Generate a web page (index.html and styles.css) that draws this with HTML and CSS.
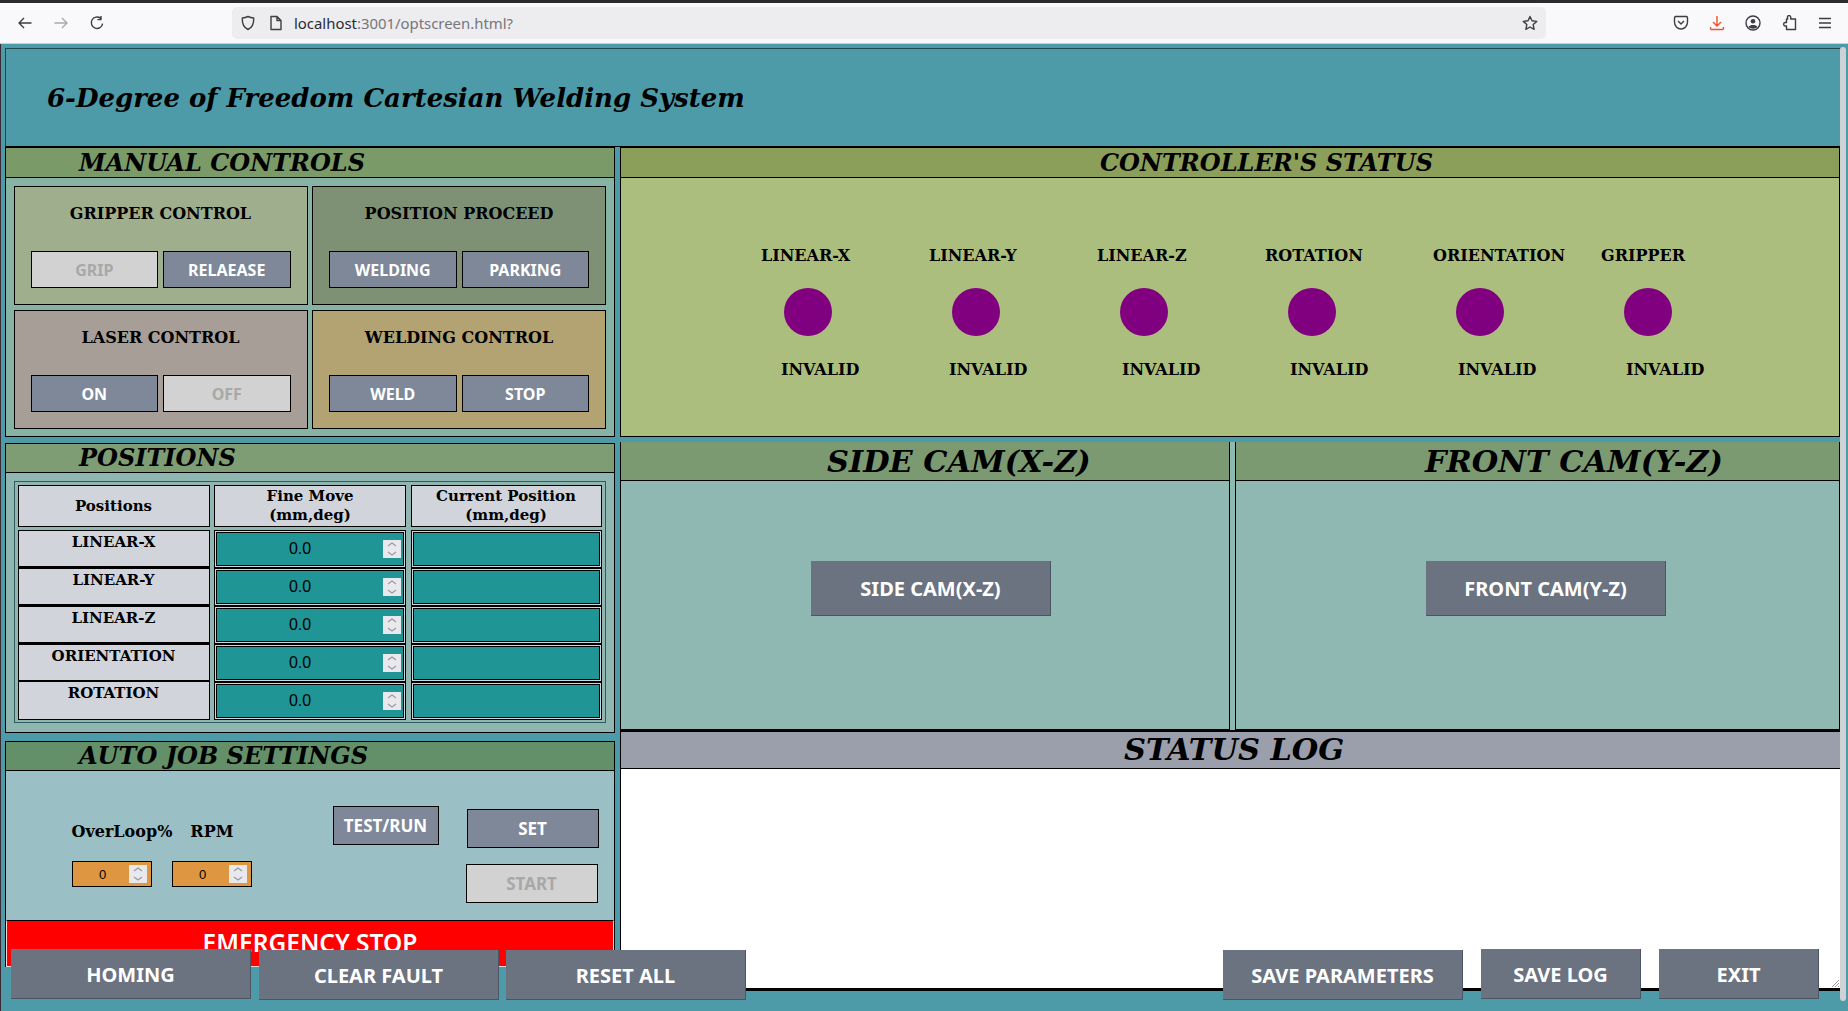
FILE: index.html
```html
<!DOCTYPE html>
<html lang="en">
<head>
<meta charset="utf-8">
<title>optscreen</title>
<link rel="stylesheet" href="styles.css">
</head>
<body>
<div class="browser-top"></div>
<nav class="toolbar">
  <div class="nav-icons">
    <svg class="icon" viewBox="0 0 16 16"><path d="M14.5 8H2M7 3 2 8l5 5" /></svg>
    <svg class="icon icon-dim" viewBox="0 0 16 16"><path d="M1.5 8H14M9 3l5 5-5 5" /></svg>
    <svg class="icon" viewBox="0 0 16 16"><path d="M13.6 8.6A5.7 5.7 0 1 1 11.6 3.4M12 1v3.6H8.4" /></svg>
  </div>
  <div class="urlbar">
    <svg class="icon" viewBox="0 0 16 16"><path d="M8 1.500c2 1 3.600 1.400 5.700 1.500.3 5.500-1.500 9.500-5.700 11.500C3.800 12.500 2 8.500 2.300 3 4.400 2.900 6 2.500 8 1.500Z"/></svg>
    <svg class="icon icon-page" viewBox="0 0 16 16"><path d="M3 1.500h6l4 4v9H3ZM9 1.500v4h4"/></svg>
    <span class="url"><span class="url-host">localhost</span>:3001/optscreen.html?</span>
    <svg class="icon icon-star" viewBox="0 0 16 16"><path d="m8 1.500 2 4.300 4.700.6-3.500 3.200.9 4.700L8 12l-4.100 2.300.9-4.700L1.300 6.400 6 5.800Z"/></svg>
  </div>
  <div class="tool-icons">
    <svg class="icon" viewBox="0 0 16 16"><path d="M2.500 1.500h11a1.500 1.500 0 0 1 1 1.500v4c0 4-3 7-6.500 7s-6.500-3-6.500-7V3a1.500 1.500 0 0 1 1-1.500ZM5 6l3 3 3-3"/></svg>
    <svg class="icon icon-download" viewBox="0 0 16 16"><path d="M8 1v10M4 7l4 4 4-4M1.500 12v1.500a1 1 0 0 0 1 1h11a1 1 0 0 0 1-1V12"/></svg>
    <svg class="icon" viewBox="0 0 16 16"><circle cx="8" cy="8" r="7"/><circle class="fill" cx="8" cy="6.200" r="2.300"/><path class="fill" d="M3.500 12c1-1.600 2.500-2 4.500-2s3.500.4 4.500 2c-1.200 1.200-2.700 1.700-4.500 1.700S4.700 13.200 3.500 12Z"/></svg>
    <svg class="icon" viewBox="0 0 16 16"><path d="M6.500 1.500a1.700 1.700 0 0 1 3.200 1V4h4.800v10.500h-9V11H4a1.800 1.800 0 0 1 0-3.500h1.500V4h1.200Z"/></svg>
    <svg class="icon" viewBox="0 0 16 16"><path d="M2 3.500h12M2 8h12M2 12.500h12"/></svg>
  </div>
</nav>

<div class="viewport">
  <main class="app">
    <header class="app-header"><h1>6-Degree of Freedom Cartesian Welding System</h1></header>
    <div class="columns">
      <div class="col-left">
        <section class="panel panel-manual">
          <h2 class="panel-title title-manual">MANUAL CONTROLS</h2>
          <div class="manual-grid">
            <div class="ctl-box box-gripper">
              <h3>GRIPPER CONTROL</h3>
              <div class="ctl-buttons"><button class="btn btn-off">GRIP</button><button class="btn">RELAEASE</button></div>
            </div>
            <div class="ctl-box box-position">
              <h3>POSITION PROCEED</h3>
              <div class="ctl-buttons"><button class="btn">WELDING</button><button class="btn">PARKING</button></div>
            </div>
            <div class="ctl-box box-laser">
              <h3>LASER CONTROL</h3>
              <div class="ctl-buttons"><button class="btn">ON</button><button class="btn btn-off">OFF</button></div>
            </div>
            <div class="ctl-box box-welding">
              <h3>WELDING CONTROL</h3>
              <div class="ctl-buttons"><button class="btn">WELD</button><button class="btn">STOP</button></div>
            </div>
          </div>
        </section>

        <section class="panel panel-positions">
          <h2 class="panel-title title-positions">POSITIONS</h2>
          <div class="positions-body">
            <div class="pos-grid">
              <div class="pos-head">Positions</div>
              <div class="pos-head">Fine Move<br>(mm,deg)</div>
              <div class="pos-head">Current Position<br>(mm,deg)</div>

              <div class="pos-name">LINEAR-X</div>
              <div class="pos-cell"><div class="num-input"><span class="num-value">0.0</span><span class="spin"><svg viewBox="0 0 18 18"><path d="m5 6 4-3 4 3M5 12l4 3 4-3"/></svg></span></div></div>
              <div class="pos-cell"><div class="num-input"></div></div>

              <div class="pos-name">LINEAR-Y</div>
              <div class="pos-cell"><div class="num-input"><span class="num-value">0.0</span><span class="spin"><svg viewBox="0 0 18 18"><path d="m5 6 4-3 4 3M5 12l4 3 4-3"/></svg></span></div></div>
              <div class="pos-cell"><div class="num-input"></div></div>

              <div class="pos-name">LINEAR-Z</div>
              <div class="pos-cell"><div class="num-input"><span class="num-value">0.0</span><span class="spin"><svg viewBox="0 0 18 18"><path d="m5 6 4-3 4 3M5 12l4 3 4-3"/></svg></span></div></div>
              <div class="pos-cell"><div class="num-input"></div></div>

              <div class="pos-name">ORIENTATION</div>
              <div class="pos-cell"><div class="num-input"><span class="num-value">0.0</span><span class="spin"><svg viewBox="0 0 18 18"><path d="m5 6 4-3 4 3M5 12l4 3 4-3"/></svg></span></div></div>
              <div class="pos-cell"><div class="num-input"></div></div>

              <div class="pos-name pos-name-last">ROTATION</div>
              <div class="pos-cell"><div class="num-input"><span class="num-value">0.0</span><span class="spin"><svg viewBox="0 0 18 18"><path d="m5 6 4-3 4 3M5 12l4 3 4-3"/></svg></span></div></div>
              <div class="pos-cell"><div class="num-input"></div></div>
            </div>
          </div>
        </section>

        <section class="panel panel-auto">
          <h2 class="panel-title title-auto">AUTO JOB SETTINGS</h2>
          <div class="auto-body">
            <div class="auto-fields">
              <div class="auto-labels"><span>OverLoop%</span><span>RPM</span></div>
              <div class="auto-inputs">
                <div class="small-input"><span class="small-value">0</span><span class="spin"><svg viewBox="0 0 18 18"><path d="m5 6 4-3 4 3M5 12l4 3 4-3"/></svg></span></div>
                <div class="small-input"><span class="small-value">0</span><span class="spin"><svg viewBox="0 0 18 18"><path d="m5 6 4-3 4 3M5 12l4 3 4-3"/></svg></span></div>
              </div>
            </div>
            <button class="btn btn-test">TEST/RUN</button>
            <div class="auto-actions">
              <button class="btn btn-set">SET</button>
              <button class="btn btn-off btn-start">START</button>
            </div>
          </div>
          <button class="btn-emergency">EMERGENCY STOP</button>
        </section>
      </div>

      <div class="col-right">
        <section class="panel panel-status">
          <h2 class="panel-title title-status">CONTROLLER'S STATUS</h2>
          <div class="status-grid">
            <div class="axis"><span class="axis-name">LINEAR-X</span><span class="led"></span><span class="axis-state">INVALID</span></div>
            <div class="axis"><span class="axis-name">LINEAR-Y</span><span class="led"></span><span class="axis-state">INVALID</span></div>
            <div class="axis"><span class="axis-name">LINEAR-Z</span><span class="led"></span><span class="axis-state axis-state-wide">INVALID</span></div>
            <div class="axis"><span class="axis-name">ROTATION</span><span class="led"></span><span class="axis-state axis-state-wide">INVALID</span></div>
            <div class="axis"><span class="axis-name">ORIENTATION</span><span class="led"></span><span class="axis-state axis-state-wide">INVALID</span></div>
            <div class="axis"><span class="axis-name">GRIPPER</span><span class="led"></span><span class="axis-state axis-state-wide">INVALID</span></div>
          </div>
        </section>

        <div class="cams">
          <section class="cam cam-side">
            <h2 class="cam-title">SIDE CAM(X-Z)</h2>
            <div class="cam-body"><button class="btn-flat btn-cam">SIDE CAM(X-Z)</button></div>
          </section>
          <section class="cam cam-front">
            <h2 class="cam-title">FRONT CAM(Y-Z)</h2>
            <div class="cam-body"><button class="btn-flat btn-cam">FRONT CAM(Y-Z)</button></div>
          </section>
        </div>

        <section class="log">
          <h2 class="log-title">STATUS LOG</h2>
          <div class="log-area">
            <svg class="resizer" viewBox="0 0 10 10"><path d="M9 2 2 9M9 5 5 9M9 8 8 9"/></svg>
          </div>
        </section>
      </div>
    </div>

    <div class="action-bar">
      <button class="btn-flat btn-action">HOMING</button>
      <button class="btn-flat btn-action btn-low">CLEAR FAULT</button>
      <button class="btn-flat btn-action btn-low btn-reset">RESET ALL</button>
      <button class="btn-flat btn-action btn-low btn-save">SAVE PARAMETERS</button>
      <button class="btn-flat btn-action btn-short btn-savelog">SAVE LOG</button>
      <button class="btn-flat btn-action btn-short">EXIT</button>
    </div>
  </main>
  <div class="scrollbar"><div class="scroll-thumb"></div></div>
</div>
</body>
</html>
```

FILE: styles.css
```css
* { box-sizing: border-box; }
html, body { margin: 0; height: 100%; overflow: hidden; }
body { background: #4d9ba8; font-family: "DejaVu Serif", serif; color: #000; }
h1, h2, h3 { margin: 0; }
button { font-family: "Noto Sans", sans-serif; padding: 0; cursor: pointer; }

.browser-top { height: 3px; background: #2b2a2e; }
.toolbar { height: 41px; background: #f9f9fb; border-bottom: 1px solid #cfcfd8; display: flex; align-items: center; }
.icon { width: 16px; height: 16px; fill: none; stroke: #3d3d42; stroke-width: 1.400; stroke-linejoin: round; flex: none; }
.icon .fill, .icon.fill { fill: #3d3d42; stroke: none; }
.icon-dim { stroke: #a8a8ae; }
.nav-icons { width: 232px; display: flex; gap: 20px; padding-left: 17px; }
.urlbar { width: 1314px; height: 32px; background: #ededef; border-radius: 5px; display: flex; align-items: center; padding-left: 8px; }
.icon-page { margin-left: 12px; }
.url { margin-left: 10px; font: 14.900px "Noto Sans", sans-serif; color: #75757c; flex: 1; }
.url-host { color: #2b2a33; }
.icon-star { margin-right: 8px; }
.tool-icons { display: flex; gap: 20px; margin-left: 127px; }
.icon-download { stroke: #f0522a; }

.viewport { height: 967px; display: flex; border-left: 1px solid #3a2a33; }
.app { flex: 1; position: relative; padding: 4px 0 0 4px; min-width: 0; }
.scrollbar { width: 8px; padding: 3px 2px 0 0; }
.scroll-thumb { height: 954px; background: #cfd2d4; border-radius: 3px; }

.app-header { height: 99px; border: 1px solid #1f4a50; border-bottom: 1px solid #000; border-right: 0; display: flex; align-items: center; padding-left: 41px; }
.app-header h1 { font-size: 26px; font-style: italic; font-weight: 700; }

.columns { display: flex; gap: 5px; }
.col-left { width: 610px; display: flex; flex-direction: column; }
.col-right { width: 1220px; display: flex; flex-direction: column; }

.panel { border: 1px solid #000; }
.panel-title { height: 29px; font-size: 24px; line-height: 28px; font-style: italic; font-weight: 700; padding-left: 73px; border-bottom: 1px solid #000; white-space: nowrap; }

.panel-manual { height: 290px; background: #86b3a3; }
.title-manual { height: 30px; background: #7a9b68; line-height: 30px; }
.manual-grid { display: grid; grid-template-columns: 294px 294px; grid-auto-rows: 119px; gap: 5px 4.500px; padding: 8px 0 0 7.500px; }
.ctl-box { border: 1px solid #000; display: flex; flex-direction: column; align-items: center; }
.ctl-box h3 { font-size: 16px; line-height: 20px; margin-top: 17px; font-weight: 700; }
.ctl-buttons { width: 260px; display: flex; gap: 5px; margin-top: 27px; }
.box-gripper { background: #9fae8c; }
.box-position { background: #7e9175; }
.box-laser { background: #a89e98; }
.box-welding { background: #b3a272; }

.btn { flex: 1; height: 37px; background: #7e8899; border: 1px solid #000; color: #fff; font-size: 16px; font-weight: 700; }
.btn-off { background: #d2d2d2; color: #a8a8a8; }

.panel-positions { height: 290px; margin-top: 6px; background: #8fb6b0; }
.title-positions { background: #7f9d74; }
.positions-body { padding: 8px 8px 0 7.500px; }
.pos-grid { height: 242px; border: 1px solid #2d5c5c; padding: 3px; display: grid; grid-template-columns: 192px 192px 191px; grid-template-rows: 45px repeat(5, 38px); column-gap: 4.500px; align-content: start; }
.pos-head { height: 42px; background: #d1d5db; border: 1px solid #000; font-size: 15px; font-weight: 700; line-height: 19px; text-align: center; display: flex; align-items: center; justify-content: center; }
.pos-name { background: #d1d5db; border: 1px solid #000; border-bottom-width: 2px; font-size: 15px; font-weight: 700; line-height: 22px; text-align: center; }
.pos-name-last { margin-top: -1px; border-bottom-width: 1px; }
.pos-cell { border: 1px solid #000; padding: 1px; background: #d1d5db; }
.num-input { height: 100%; background: #209595; border: 1px solid #000; display: flex; align-items: center; padding-right: 2px; }
.num-value { flex: 1; text-align: center; font: 16px "Liberation Sans", sans-serif; }
.spin { width: 18px; height: 18px; background: #e9e9ed; flex: none; display: flex; }
.spin svg { width: 18px; height: 18px; fill: none; stroke: #9a9aa4; stroke-width: 1.200; }

.panel-auto { margin-top: 8px; height: 226px; background: #9abfc5; }
.title-auto { background: #639068; }
.auto-body { height: 149px; display: flex; align-items: flex-start; padding-left: 65.500px; }
.auto-fields { width: 180px; padding-top: 51px; }
.auto-labels { display: flex; height: 20px; line-height: 20px; font-size: 16px; font-weight: 700; gap: 18px; white-space: nowrap; }
.auto-inputs { display: flex; gap: 20px; margin-top: 19px; }
.small-input { width: 80px; height: 26px; background: #de9640; border: 1px solid #000; display: flex; align-items: center; padding-right: 4px; }
.small-value { flex: 1; text-align: center; font: 13px "Liberation Sans", sans-serif; padding-left: 4px; }
.btn-test { flex: none; width: 106px; height: 39px; margin: 35px 0 0 81px; font-size: 17px; }
.auto-actions { display: flex; flex-direction: column; align-items: flex-start; gap: 16px; margin: 38px 0 0 27px; }
.btn-set { flex: none; width: 132px; height: 39px; margin-left: 1px; font-size: 17px; }
.btn-start { flex: none; width: 132px; height: 39px; font-size: 17px; }
.btn-emergency { display: block; width: 100%; height: 47px; background: #ff0000; color: #fff; border: 1px solid #f2d8d8; border-top: 1px solid #000; font-size: 24.500px; font-weight: 600; padding-bottom: 2px; }

.panel-status { height: 290px; background: #acbe7d; }
.title-status { height: 30px; background: #8b9f5a; padding-left: 479px; line-height: 30px; }
.status-grid { display: grid; grid-template-columns: repeat(6, 168px); padding: 68px 0 0 140px; }
.axis { display: flex; flex-direction: column; align-items: flex-start; font-size: 16px; font-weight: 700; line-height: 20px; white-space: nowrap; }
.led { width: 48px; height: 48px; border-radius: 50%; background: #800080; margin: 22px 0 24px 23px; }
.axis-state { margin-left: 20px; }
.axis-state-wide { margin-left: 25px; }

.cams { margin-top: 5px; height: 288px; display: flex; gap: 5px; background: #8cbab3; }
.cam { border: 1px solid #000; border-top: 0; background: #8fb8b2; display: flex; flex-direction: column; }
.cam-side { width: 610px; }
.cam-front { width: 605px; }
.cam-title { height: 39px; background: #7c9a72; border-bottom: 1px solid #000; font-size: 30.400px; line-height: 38px; font-style: italic; font-weight: 700; white-space: nowrap; }
.cam-side .cam-title { padding-left: 206px; }
.cam-front .cam-title { padding-left: 189px; }
.cam-body { flex: 1; display: flex; align-items: center; padding: 0 0 33px 190px; }
.btn-flat { background: #6b7280; color: #fff; border: 0; border-right: 1px solid #4b5563; border-bottom: 1px solid #4b5563; font-weight: 700; }
.btn-cam { width: 240px; height: 55px; font-size: 20px; }

.log { height: 261px; border-left: 1px solid #000; border-bottom: 3px solid #000; display: flex; flex-direction: column; }
.log-title { height: 39px; background: #9a9fab; border-top: 2px solid #000; border-bottom: 1px solid #000; font-size: 30.400px; line-height: 35px; font-style: italic; font-weight: 700; padding-left: 503px; }
.log-area { flex: 1; background: #fff; position: relative; }
.resizer { position: absolute; right: 0; bottom: 0; width: 10px; height: 10px; fill: none; stroke: #9a9a9a; stroke-width: 1; }

.action-bar { position: absolute; left: 10px; right: 21px; top: 905px; display: flex; align-items: flex-start; gap: 8px; }
.btn-action { width: 240px; height: 50px; font-size: 20px; padding-top: 2px; }
.btn-low { margin-top: 1px; }
.btn-reset { margin-left: -1px; }
.btn-save { margin-left: auto; margin-right: 10px; }
.btn-savelog { margin-right: 10px; }
.btn-short { width: 160px; }
```
